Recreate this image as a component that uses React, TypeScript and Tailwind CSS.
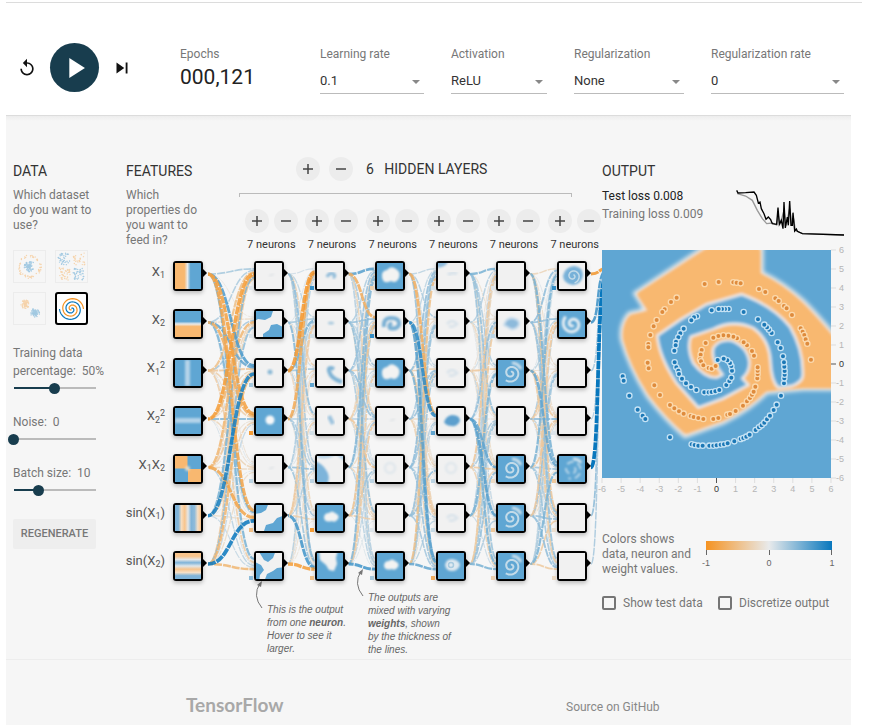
import React from "react";
import { MdPlayArrow, MdReplay, MdSkipNext } from "react-icons/md";

const ORANGE = "#f59322";
const BLUE = "#0877bd";
const PALE = "#e8eaeb";

const mix = (a: string, b: string, t: number) => {
  const ch = (s: string, i: number) => parseInt(s.slice(i, i + 2), 16);
  const out = [1, 3, 5].map((i) => Math.round(ch(a, i) + (ch(b, i) - ch(a, i)) * t));
  return `rgb(${out.join(",")})`;
};

/* Colour of a weight between -1 (orange) and 1 (blue). */
const weightColor = (w: number) => mix(PALE, w < 0 ? ORANGE : BLUE, Math.min(1, Math.abs(w)));

/* Small deterministic generator, so that the network looks the same each time. */
const seeded = (seed: number) => () => {
  seed = (seed * 1664525 + 1013904223) % 4294967296;
  return seed / 4294967296;
};

const spiral = (cx: number, cy: number, r0: number, r1: number, turns: number, phase: number) => {
  let d = "";
  const steps = 60;
  for (let i = 0; i <= steps; i++) {
    const t = i / steps;
    const r = r0 + (r1 - r0) * t;
    const a = phase + t * turns * 2 * Math.PI;
    d += `${i ? "L" : "M"}${(cx + r * Math.sin(a)).toFixed(1)} ${(cy - r * Math.cos(a)).toFixed(1)}`;
  }
  return d;
};

/* ---------- header ---------- */

function Picker({ id, label, value, size }: { id: string; label: string; value: string; size: string }) {
  return (
    <div className={`flex grow flex-col ${size}`}>
      <label htmlFor={id} className="text-[12px] leading-4 text-[#777]">
        {label}
      </label>
      <div className="relative mt-[6px]">
        <select
          id={id}
          defaultValue={value}
          className="h-[26px] w-full appearance-none border-b border-[#bbb] bg-transparent text-[13px] text-[#333] outline-none"
        >
          <option>{value}</option>
        </select>
        <span className="pointer-events-none absolute top-[12px] right-1 border-x-4 border-t-4 border-x-transparent border-t-[#888]" />
      </div>
    </div>
  );
}

function Header() {
  return (
    <header className="mr-[18px] ml-[6px] flex h-[113px] items-start border-b border-[#dcdcdc] pr-[7px] pt-[40px]">
      <div className="flex w-[174px] shrink-0 items-center">
        <button aria-label="Reset" className="ml-[11px] text-[#111]">
          <MdReplay size={20} />
        </button>
        <button
          aria-label="Run"
          className="ml-[13px] flex size-[49px] items-center justify-center rounded-full bg-[#183d4e] text-white"
        >
          <MdPlayArrow size={34} />
        </button>
        <button aria-label="Step" className="ml-[12px] text-[#111]">
          <MdSkipNext size={22} />
        </button>
      </div>
      <div className="w-[140px] shrink-0 pt-[3px]">
        <div className="text-[12px] leading-4 text-[#777]">Epochs</div>
        <div className="mt-px text-[21px] leading-7 text-[#222]">000,121</div>
      </div>
      <div className="flex grow gap-[27px] pt-[3px]">
        <Picker id="rate" label="Learning rate" value="0.1" size="basis-[104px]" />
        <Picker id="activation" label="Activation" value="ReLU" size="basis-[96px]" />
        <Picker id="reg" label="Regularization" value="None" size="basis-[110px]" />
        <Picker id="regrate" label="Regularization rate" value="0" size="basis-[133px]" />
      </div>
    </header>
  );
}

/* ---------- data column ---------- */

function DatasetThumb({ kind }: { kind: "circle" | "xor" | "gauss" | "spiral" }) {
  if (kind === "spiral") {
    return (
      <svg viewBox="0 0 29 29" className="size-full" fill="none" strokeWidth="1.2">
        <path d={spiral(14.5, 15, 0.5, 12, 1.75, 0)} stroke={BLUE} />
        <path d={spiral(14.5, 15, 0.5, 12, 1.75, Math.PI)} stroke={ORANGE} />
      </svg>
    );
  }
  const rnd = seeded(kind === "circle" ? 7 : kind === "xor" ? 21 : 45);
  const dots: [number, number, string][] = [];
  for (let i = 0; i < 150; i++) {
    const a = rnd() * Math.PI * 2;
    const r = rnd();
    const pick = rnd();
    if (kind === "circle") {
      const inner = pick < 0.5;
      const d = inner ? r * 5.5 : 9.5 + r * 2.5;
      dots.push([15.5 + d * Math.sin(a), 15.5 + d * Math.cos(a), inner ? BLUE : ORANGE]);
    } else if (kind === "xor") {
      const qx = pick < 0.5 ? 0 : 1;
      const qy = a < Math.PI ? 0 : 1;
      dots.push([2 + qx * 15 + r * 12, 2 + qy * 15 + rnd() * 12, qx === qy ? BLUE : ORANGE]);
    } else {
      const s = pick < 0.5;
      const d = r * 4.5;
      dots.push([(s ? 21 : 11) + d * Math.sin(a), (s ? 20 : 11) + d * Math.cos(a), s ? BLUE : ORANGE]);
    }
  }
  return (
    <svg viewBox="0 0 31 31" className="size-full opacity-35">
      {dots.map(([x, y, c], i) => (
        <circle key={i} cx={x} cy={y} r="0.7" fill={c} />
      ))}
    </svg>
  );
}

const RANGE =
  "-ml-[5px] mt-[2px] block h-[12px] w-[93px] appearance-none bg-[length:82px_2px] bg-center bg-no-repeat [&::-webkit-slider-thumb]:size-[11px] [&::-webkit-slider-thumb]:appearance-none [&::-webkit-slider-thumb]:rounded-full [&::-webkit-slider-thumb]:bg-[#183d4e]";

function DataColumn() {
  return (
    <section className="w-[113px] shrink-0 pt-1">
      <h2 className="text-[14px] leading-5 text-[#333]">DATA</h2>
      <p className="mt-[7px] w-[82px] text-[12px] leading-[15px] text-[#777]">Which dataset do you want to use?</p>
      <div className="mt-[17px] grid w-[75px] grid-cols-2 gap-[9px]">
        {(["circle", "xor", "gauss"] as const).map((k) => (
          <button key={k} aria-label={k} className="size-[33px] border border-[#ececec]">
            <DatasetThumb kind={k} />
          </button>
        ))}
        <button aria-label="spiral" className="size-[33px] rounded-[3px] border-2 border-black bg-white">
          <DatasetThumb kind="spiral" />
        </button>
      </div>
      <div className="mt-[19px] text-[12px] leading-[18px] text-[#777]">
        <label htmlFor="split" className="block whitespace-nowrap">
          Training data
          <br />
          percentage:&nbsp; 50%
        </label>
        <input id="split" type="range" min="10" max="90" defaultValue="50"
          className={`${RANGE} bg-[linear-gradient(to_right,#183d4e_50%,#bbb_50%)]`} />
        <label htmlFor="noise" className="mt-[19px] block">
          Noise:&nbsp; 0
        </label>
        <input id="noise" type="range" min="0" max="50" defaultValue="0"
          className={`${RANGE} bg-[linear-gradient(#bbb,#bbb)]`} />
        <label htmlFor="batch" className="mt-[19px] block">
          Batch size:&nbsp; 10
        </label>
        <input id="batch" type="range" min="1" max="30" defaultValue="10"
          className={`${RANGE} bg-[linear-gradient(to_right,#183d4e_31%,#bbb_31%)]`} />
      </div>
      <button className="mt-[23px] h-[30px] w-[83px] rounded-[2px] bg-[#eee] text-[11px] font-medium text-[#777]">
        REGENERATE
      </button>
    </section>
  );
}

/* ---------- network ---------- */

const LIGHT = "#f1f1f1";
const SKY = "#5fa6d3";
const PEACH = "#f8b870";

function NodePicture({ kind }: { kind: string }) {
  const soft = "url(#soft)";
  const sky = <rect width="26" height="26" fill={SKY} />;
  const blank = <rect width="26" height="26" fill={LIGHT} />;
  const body = (): React.ReactNode => {
    switch (kind) {
      case "x1":
        return <rect width="26" height="26" fill="url(#gx)" />;
      case "x2":
        return <rect width="26" height="26" fill="url(#gy)" />;
      case "x1sq":
        return <>{sky}<rect x="10" width="5" height="26" fill="#b4d3e9" filter={soft} /></>;
      case "x2sq":
        return <>{sky}<rect y="10" width="26" height="5" fill="#b4d3e9" filter={soft} /></>;
      case "x1x2":
        return (
          <>
            {sky}
            <path d="M0 0h12.500v12.500H0zM13 13h13v13H13z" fill={PEACH} />
            <circle cx="12.500" cy="12.500" r="2.500" fill="#e4d9c4" filter={soft} />
          </>
        );
      case "sin1":
        return <rect width="26" height="26" fill="url(#gs)" />;
      case "sin2":
        return <rect width="26" height="26" fill="url(#gt)" />;
      case "faint":
        return <>{blank}<path d="M13 13l5-2" stroke="#e2e5e7" strokeWidth="2" filter={soft} /></>;
      case "corners":
        return (
          <>
            {blank}
            <g fill={SKY} filter="url(#fine)">
              <path d="M-3-3H18L15 6L9 9L2 8L-3 11Z" />
              <path d="M29 17L21 13L15 14L13 19L7 23V29H29Z" />
            </g>
          </>
        );
      case "corners2":
        return (
          <>
            {blank}
            <g fill={SKY} filter="url(#fine)">
              <path d="M-3-3H13L10 5L5 8L-3 9Z" />
              <path d="M29 10L21 13L17 18L10 20L7 29H29Z" />
            </g>
          </>
        );
      case "cross":
        return (
          <>
            {blank}
            <g fill={SKY} filter="url(#fine)">
              <path d="M2-3H20L17 5L12 9L8 7Z" />
              <path d="M-3 8L5 12L8 17L4 22L3 29H-3Z" />
              <path d="M29 14L21 15L17 18L11 21L8 29H29Z" />
            </g>
          </>
        );
      case "dot":
        return <>{blank}<circle cx="14" cy="12" r="2.500" fill="#8bb9d6" filter={soft} /></>;
      case "smudge":
        return <>{blank}<ellipse cx="14" cy="12" rx="3" ry="1.500" fill="#a9c9de" filter={soft} /></>;
      case "tall":
        return <>{blank}<path d="M12 8l4 8" stroke="#9cc3de" strokeWidth="4" filter={soft} /></>;
      case "arc":
        return <>{blank}<path d="M10 14q2-5 7-3q2 2-1 4" fill="none" stroke="#8fbbd9" strokeWidth="3" filter={soft} /></>;
      case "swoosh":
        return (
          <>
            {blank}
            <path d="M17 9q-6-3-5 2q2 8 13 11" fill="none" stroke="#7fb3d5" strokeWidth="4" filter={soft} />
          </>
        );
      case "hole":
        return <>{sky}<circle cx="14" cy="12" r="4.500" fill="#f6f8f9" filter={soft} /></>;
      case "cloud":
        return (
          <>
            {sky}
            <path d="M7 13q0-5 5-5q3-3 6 0q5 2 3 6q-3 4-6 2q-7 2-8-3z" fill="#f3f3f2" filter={soft} />
          </>
        );
      case "bigcloud":
        return (
          <>
            {sky}
            <path d="M5 14q-1-6 5-7q4-5 9-1q5 3 3 9q-3 6-8 3q-8 4-9-4z" fill="#f3f3f2" filter={soft} />
          </>
        );
      case "bay":
        return (
          <>
            {sky}
            <path d="M2-3L3 7L9 12L12 17L17 18L20 11L19 5L21-3Z" fill={LIGHT} filter={soft} />
          </>
        );
      case "side":
        return (
          <>
            {blank}
            <path d="M-3 5Q5 7 9 14Q14 20 10 29H-3Z" fill="#7db4da" filter={soft} />
            <path d="M0 1Q8 5 19-1L29 6V-3H0Z" fill="#b7d4e8" filter={soft} />
          </>
        );
      case "curl":
        return (
          <>
            {blank}
            <path d="M7 16q-1-9 7-9q9 0 8 7q-3 5-9 3q-2-3 2-5" fill="none" stroke="#7ab0d4" strokeWidth="4" filter={soft} />
          </>
        );
      case "blob":
        return <>{blank}<path d="M6 14q2-6 8-7q8 0 8 6q-3 6-8 5q-6 0-8-4z" fill="#5c9fcd" filter={soft} /></>;
      case "paleblob":
        return <>{blank}<path d="M6 14q2-7 8-7q8 1 7 7q-3 5-8 4z" fill="#8dbadb" stroke="#c9ddec" strokeWidth="2" filter={soft} /></>;
      case "mist":
        return <>{blank}<path d="M9 13q5-6 10 0q-4 4-8 2" fill="none" stroke="#dbe4eb" strokeWidth="3" filter={soft} /></>;
      case "mistring":
        return <>{blank}<circle cx="13" cy="12" r="5" fill="none" stroke="#e0e7ec" strokeWidth="2.500" filter={soft} /></>;
      case "cornermist":
        return (
          <>
            {blank}
            <path d="M-2-2h12q-1 6-12 7z" fill="#8dbadb" filter={soft} />
            <path d="M10 12q5-4 9-1" stroke="#dbe4eb" strokeWidth="4" fill="none" filter={soft} />
          </>
        );
      case "swirl":
        return (
          <>
            {blank}
            <path d="M4 13q2-9 11-10q9 1 9 9q-1 9-10 10q-9-1-10-9z" fill="#78b1d8" filter={soft} />
            <path d={spiral(14, 13, 1, 7, 1.4, 0.4)} fill="none" stroke="#c3dbe9" strokeWidth="1.500" filter="url(#fine)" />
          </>
        );
      case "spiralbold":
        return (
          <>
            {sky}
            <path d={spiral(13.5, 13, 1, 10, 1.5, 2.4)} fill="none" stroke="#e6eef3" strokeWidth="3" filter={soft} />
          </>
        );
      case "spiral":
        return (
          <>
            {sky}
            <path d={spiral(13, 13, 1, 9, 1.6, 0)} fill="none" stroke="#c3dbe9" strokeWidth="2" filter="url(#fine)" />
            <path d="M14 3q6 0 9 6" fill="none" stroke="#cfe1ec" strokeWidth="3" filter={soft} />
          </>
        );
      case "broken":
        return (
          <>
            {sky}
            <path d={spiral(13, 13, 3, 10, 1.4, 1)} fill="none" stroke="#b9d6e8" strokeWidth="2" strokeDasharray="7 4" filter={soft} />
            <path d="M14 3q6 0 8 4" fill="none" stroke="#cfe1ec" strokeWidth="3" filter={soft} />
          </>
        );
      case "eye":
        return (
          <>
            {sky}
            <path d="M7 12q1-6 7-6q7 1 8 6q-2 6-8 6q-6 0-7-6z" fill="#dfe9f0" filter={soft} />
            <circle cx="13" cy="12" r="2.500" fill="none" stroke="#a9cbe0" strokeWidth="1.500" filter="url(#fine)" />
          </>
        );
      default:
        return blank;
    }
  };
  return (
    <svg viewBox="0 0 26 26" className="size-full">
      {body()}
    </svg>
  );
}

function Node({ kind, bias }: { kind: string; bias?: number }) {
  return (
    <div className="relative size-[30px] rounded-[3px] border-2 border-black shadow-[0_2px_4px_rgba(0,0,0,0.25)]">
      <NodePicture kind={kind} />
      <span className="absolute top-[6px] left-[28px] border-y-4 border-l-4 border-y-transparent border-l-black" />
      {bias !== undefined && (
        <span className="absolute top-[23px] -left-[7px] size-1" style={{ backgroundColor: weightColor(bias) }} />
      )}
    </div>
  );
}

const FEATURES: { kind: string; label: React.ReactNode }[] = [
  { kind: "x1", label: <>X<Sub>1</Sub></> },
  { kind: "x2", label: <>X<Sub>2</Sub></> },
  { kind: "x1sq", label: <>X<Sub>1</Sub><Sup>2</Sup></> },
  { kind: "x2sq", label: <>X<Sub>2</Sub><Sup>2</Sup></> },
  { kind: "x1x2", label: <>X<Sub>1</Sub>X<Sub>2</Sub></> },
  { kind: "sin1", label: <>sin(X<Sub>1</Sub>)</> },
  { kind: "sin2", label: <>sin(X<Sub>2</Sub>)</> },
];

function Sub({ children }: { children: React.ReactNode }) {
  return <sub className="text-[9px]">{children}</sub>;
}
function Sup({ children }: { children: React.ReactNode }) {
  return <sup className="text-[9px]">{children}</sup>;
}

const LAYERS: [string, number][][] = [
  [["faint", 0.05], ["corners", 0.05], ["dot", 0.3], ["hole", -0.9], ["faint", 0.2], ["corners2", -0.5], ["cross", 0.4]],
  [["arc", 0.8], ["smudge", 0.1], ["swoosh", 0.6], ["tall", 0.1], ["side", 0.2], ["cloud", -0.9], ["bay", -0.5]],
  [["bigcloud", -0.3], ["curl", 0.8], ["bigcloud", 0.1], ["faint", 0.05], ["mistring", 0.2], ["blank", 0.05], ["cloud", 0.3]],
  [["cornermist", 0.1], ["mist", 0.1], ["mist", 0.1], ["blob", 0.6], ["mistring", 0.2], ["mist", 0.15], ["eye", -0.7]],
  [["blank", 0.05], ["paleblob", 0.2], ["spiral", -0.1], ["blank", 0.05], ["spiral", -0.2], ["spiral", -0.4], ["spiral", -0.3]],
  [["swirl", 0.8], ["spiralbold", 0.05], ["blank", 0.05], ["blank", 0.05], ["broken", -0.4], ["blank", -0.15], ["blank", -0.2]],
];

/* Strong connections: gap index, source row, target row, weight. */
const STRONG: [number, number, number, number][] = [
  [0, 6, 5, 1], [0, 6, 6, -0.6], [0, 5, 2, 0.95], [0, 3, 0, -0.9], [0, 3, 1, -0.6], [0, 0, 3, -0.85],
  [0, 0, 2, 0.7], [0, 0, 5, -0.8], [0, 4, 0, -0.6], [0, 4, 5, -0.8], [0, 1, 3, -0.7], [0, 1, 2, 0.6],
  [0, 1, 5, 0.5], [0, 5, 0, 0.5], [0, 6, 2, -0.6], [0, 2, 0, -0.5], [0, 0, 0, 0.3], [0, 3, 3, 0.45],
  [0, 2, 2, -0.4], [0, 0, 6, 0.5], [0, 6, 1, 0.4],
  [1, 2, 0, -0.95], [1, 3, 0, -0.75], [1, 5, 6, 0.75], [1, 6, 6, -0.9], [1, 2, 1, 0.5], [1, 1, 6, 0.45], [1, 0, 3, 0.4],
  [2, 0, 0, 0.65], [2, 0, 1, -0.7], [2, 6, 6, 0.75], [2, 4, 0, 0.45], [2, 6, 0, 0.45], [2, 5, 1, -0.45],
  [3, 1, 3, 0.85], [3, 0, 3, -0.7], [3, 1, 6, 0.65], [3, 2, 6, 0.5], [3, 6, 6, 0.6], [3, 6, 0, -0.5], [3, 4, 0, 0.4],
  [4, 0, 0, 0.5], [4, 3, 4, 0.6], [4, 3, 5, 0.65], [4, 3, 6, 0.5], [4, 6, 6, 0.5], [4, 5, 2, 0.5], [4, 4, 0, -0.4], [4, 3, 1, 0.4],
  [5, 0, 4, 0.5], [5, 2, 4, 0.6], [5, 4, 0, 0.5], [5, 6, 4, 0.5], [5, 1, 0, 0.4], [5, 5, 1, -0.4],
];

const rowY = (i: number) => 13 + i * (290 / 6);
const startX = (g: number) => (g === 0 ? 82 : 128 + (g - 1) * 60.6 + 34);
const endX = (g: number) => 128 + g * 60.6;

function Links() {
  const rnd = seeded(11);
  const links: { g: number; s: number; t: number; w: number }[] = [];
  for (let g = 0; g < 6; g++)
    for (let s = 0; s < 7; s++)
      for (let t = 0; t < 7; t++) {
        const strong = STRONG.find((k) => k[0] === g && k[1] === s && k[2] === t);
        const a = rnd();
        const b = rnd();
        links.push({ g, s, t, w: strong ? strong[3] : (a < 0.48 ? -1 : 1) * (0.05 + b * 0.35) });
      }
  links.sort((a, b) => Math.abs(a.w) - Math.abs(b.w));
  const out: [number, number][] = [[0, -0.8], [1, 0.65], [2, 0.25], [3, 0.2], [5, 0.35], [6, 0.25], [4, 1]];
  return (
    <svg className="pointer-events-none absolute inset-0 h-[320px] w-[476px]" viewBox="0 0 476 320" fill="none">
      <defs>
        <filter id="soft" x="-30%" y="-30%" width="160%" height="160%"><feGaussianBlur stdDeviation="1" /></filter>
        <filter id="fine" x="-30%" y="-30%" width="160%" height="160%"><feGaussianBlur stdDeviation="0.6" /></filter>
        <linearGradient id="gx">
          <stop offset="0.36" stopColor={PEACH} /><stop offset="0.48" stopColor={PALE} /><stop offset="0.6" stopColor={SKY} />
        </linearGradient>
        <linearGradient id="gy" x2="0" y2="1">
          <stop offset="0.4" stopColor={SKY} /><stop offset="0.5" stopColor={PALE} /><stop offset="0.6" stopColor={PEACH} />
        </linearGradient>
        {["gs", "gt"].map((id) => (
          <linearGradient key={id} id={id} x2={id === "gs" ? 1 : 0} y2={id === "gs" ? 0 : 1}>
            {(id === "gs"
              ? ["#7fb3d8", "#7fb3d8", "#f7dcbd", "#f8c48c", "#e4e6e7", "#7fb3d8", "#8fbbda", "#f5dfc6", "#f8c48c"]
              : ["#f8c48c", "#f8c48c", "#e4e6e7", "#7fb3d8", "#dfe6ea", "#f8c48c", "#f5dfc6", "#7fb3d8", "#7fb3d8"]
            ).map((c, i) => (
              <stop key={i} offset={i / 8} stopColor={c} />
            ))}
          </linearGradient>
        ))}
      </defs>
      {links.map(({ g, s, t, w }) => {
        const x0 = startX(g);
        const x1 = endX(g);
        const y0 = rowY(s);
        const y1 = rowY(t) + ((s - 3) / 7) * 12;
        const m = (x0 + x1) / 2;
        return (
          <path
            key={`${g}-${s}-${t}`}
            d={`M${x0} ${y0}C${m} ${y0} ${m} ${y1} ${x1} ${y1}`}
            stroke={weightColor(w)}
            strokeWidth={0.7 + Math.abs(w) * 3}
            strokeOpacity={0.85}
            strokeDasharray="8 1"
            strokeDashoffset={(s * 5 + t * 3) % 9}
          />
        );
      })}
      {out.map(([s, w]) => (
        <path
          key={s}
          d={`M465 ${rowY(s)}C474 ${rowY(s)} 470 ${10 + s * 2} 480 ${7 + s * 2}`}
          stroke={weightColor(w)}
          strokeWidth={0.7 + Math.abs(w) * 3}
          strokeDasharray="8 1"
        />
      ))}
    </svg>
  );
}

function RoundButton({ sign, label }: { sign: "+" | "-"; label: string }) {
  return (
    <button aria-label={label} className="flex size-6 items-center justify-center rounded-full bg-[#ececec]">
      <svg viewBox="0 0 12 12" className="size-3" stroke="#444" strokeWidth="1.5">
        <path d={sign === "+" ? "M1 6h10M6 1v10" : "M1 6h10"} />
      </svg>
    </button>
  );
}

function Network() {
  return (
    <section className="w-[476px] shrink-0">
      <div className="flex">
        <div className="w-[113px] shrink-0 pt-1">
          <h2 className="text-[14px] leading-5 text-[#333]">FEATURES</h2>
          <p className="mt-[7px] w-[72px] text-[12px] leading-[15px] text-[#777]">
            Which properties do you want to feed in?
          </p>
        </div>
        <div className="w-[363px] pb-2">
          <div className="flex items-center gap-[9px] pl-[57px]">
            <RoundButton sign="+" label="Add layer" />
            <RoundButton sign="-" label="Remove layer" />
            <h2 className="ml-1 text-[14px] leading-5 whitespace-pre text-[#333]">6{"   "}HIDDEN LAYERS</h2>
          </div>
          <div className="mt-3 h-1 w-[333px] border-x border-t border-[#bbb]" />
          <div className="ml-[2px] mt-3 grid w-[364px] grid-cols-6">
            {LAYERS.map((_, i) => (
              <div key={i} className="flex flex-col items-center gap-1">
                <div className="flex gap-[5px]">
                  <RoundButton sign="+" label="Add neuron" />
                  <RoundButton sign="-" label="Remove neuron" />
                </div>
                <div className="text-[11px] leading-4 text-[#333]">7 neurons</div>
              </div>
            ))}
          </div>
        </div>
      </div>

      <div className="relative flex h-[320px]">
        <Links />
        <div className="flex w-[39px] flex-col justify-between pt-px text-right text-[13px] leading-5 whitespace-nowrap text-[#555]">
          {FEATURES.map((f) => (
            <div key={f.kind} className="flex h-[30px] items-start justify-end">
              <span>{f.label}</span>
            </div>
          ))}
        </div>
        <div className="ml-2 flex flex-col justify-between">
          {FEATURES.map((f) => (
            <Node key={f.kind} kind={f.kind} />
          ))}
        </div>
        <div className="ml-[51px] flex w-[333px] justify-between">
          {LAYERS.map((layer, i) => (
            <div key={i} className="flex flex-col justify-between">
              {layer.map(([kind, bias], j) => (
                <Node key={j} kind={kind} bias={bias} />
              ))}
            </div>
          ))}
        </div>
      </div>

      <div className="flex items-start pl-[128px] font-['Liberation_Sans',sans-serif] text-[10px] leading-[13px] whitespace-nowrap text-[#666] italic">
        <Arrow />
        <p className="mt-[22px] w-[82px]">
          This is the output
          <br />
          from one <b>neuron</b>.
          <br />
          Hover to see it
          <br />
          larger.
        </p>
        <div className="-mt-3 ml-[6px]">
          <Arrow />
        </div>
        <p className="mt-[10px] w-[86px]">
          The outputs are
          <br />
          mixed with varying
          <br />
          <b>weights</b>, shown
          <br />
          by the thickness of
          <br />
          the lines.
        </p>
      </div>
    </section>
  );
}

function Arrow() {
  return (
    <svg viewBox="0 0 13 30" className="h-[30px] w-[13px] shrink-0" fill="none" stroke="#777">
      <path d="M8 27Q-2 15 6 2" />
      <path d="M8 0l-5 4 4 2z" fill="#777" stroke="none" />
    </svg>
  );
}

/* ---------- output ---------- */

const ORANGE_DOTS =
  "344,132 386,126 430,127 440,128 452,130 507,147 526,156 556,175 566,183 582,198 590,205 606,225 632,265 638,275 643,285 647,298 652,311 663,359 260,173 243,186 224,208 217,216 200,240 191,259 181,285 175,312 175,322 173,368 176,385 193,436 210,465 240,495 253,505 267,514 281,521 302,528 311,531 325,534 340,537 370,537 385,534 412,524 420,522 437,513 459,497 471,484 480,474 486,464 491,455 496,440 502,415 503,402 503,392 503,382 492,347 486,333 471,316 461,307 441,295 430,290 415,287 400,286 385,288 370,293 347,309 335,330 332,344 330,358 333,364 340,376 356,384 365,386 377,378";
const BLUE_DOTS =
  "98,409 101,422 118,467 143,509 158,527 166,537 240,592 305,613 314,615 325,617 338,617 358,617 370,617 380,616 392,614 402,613 413,610 433,604 452,597 460,594 469,590 479,584 497,570 507,562 515,556 523,548 531,538 540,527 551,510 560,494 573,467 582,430 583,415 584,404 584,393 583,380 582,367 579,349 572,324 563,307 545,279 537,269 531,262 523,254 504,238 461,216 416,207 405,207 396,207 386,207 365,211 321,229 312,232 304,241 281,266 271,280 265,292 258,305 257,316 253,332 254,367 259,382 265,392 267,402 276,416 288,430 303,441 319,450 343,457 356,457 365,456 376,454 388,450 409,435 418,423 424,413 426,392 424,378 420,369 412,361 401,356 383,360";

const toPoints = (s: string) => s.split(" ").map((p) => p.split(",").map(Number));

function Heatmap() {
  const ticks = Array.from({ length: 13 }, (_, i) => i - 6);
  return (
    <svg viewBox="-1 -8 250 254" className="-mt-2 -ml-px block h-[254px] w-[250px] overflow-visible">
      <defs>
        <clipPath id="map"><rect width="229" height="228" /></clipPath>
        <filter id="edge" filterUnits="userSpaceOnUse" x="-20" y="-20" width="800" height="800">
          <feGaussianBlur stdDeviation="7" />
        </filter>
        <filter id="edge2" filterUnits="userSpaceOnUse" x="-20" y="-20" width="800" height="800">
          <feGaussianBlur stdDeviation="4" />
        </filter>
      </defs>
      <g clipPath="url(#map)">
        <rect width="229" height="228" fill={SKY} />
        <g transform="translate(-12 -10) scale(0.3333)">
          <g filter="url(#edge)">
            <path
              d="M345 20H516V98Q580 128 640 182Q690 232 750 305V447H640L530 458Q480 510 400 548L285 590Q225 538 172 468Q118 380 95 300Q88 252 117 220L165 210L134 160Z"
              fill={PEACH}
              stroke="#edf0f1"
              strokeWidth="10"
            />
          </g>
          <g filter="url(#edge2)">
            <path
              d="M355 26H509V101Q580 135 635 190Q680 235 740 308V443H640L528 452Q475 500 398 540L288 579Q230 532 177 462Q123 380 102 300Q96 255 122 227L178 213L142 161Z"
              fill={PEACH}
            />
            <path
              d="M565 443L605 438Q642 425 638 400Q640 330 600 260Q550 198 455 163L350 193L270 240L202 287Q207 350 260 430L325 503L400 475L475 435L457 415Q480 395 478 365Q472 320 425 302Q385 297 370 325Q362 360 398 404L380 413Q345 415 310 370Q290 325 302 290L370 267Q430 237 490 264Q540 300 542 370Q545 425 565 443Z"
              fill={SKY}
              stroke="#edf0f1"
              strokeWidth="7"
            />
          </g>
          <g strokeWidth="4">
            {toPoints(ORANGE_DOTS).map(([x, y], i) => (
              <circle key={i} cx={x} cy={y} r="8" fill="#df8b3c" stroke="#fbd9ad" />
            ))}
            {toPoints(BLUE_DOTS).map(([x, y], i) => (
              <circle key={i} cx={x} cy={y} r="8" fill="#1c78b6" stroke="#c5e2f4" />
            ))}
          </g>
        </g>
      </g>
      <g fontSize="9" className="font-['Liberation_Sans',sans-serif]">
        {ticks.map((v) => {
          const x = ((v + 6) / 12) * 229;
          const y = 228 - ((v + 6) / 12) * 228;
          const c = v === 0 ? "#333" : "#b5b5b5";
          return (
            <g key={v} fill={c}>
              <path d={`M${x} 228v5M229 ${y}h5`} stroke={v === 0 ? "#555" : "#ddd"} />
              <text x={x} y="242" textAnchor="middle">{v}</text>
              <text x="242" y={y + 3} textAnchor="end">{v}</text>
            </g>
          );
        })}
      </g>
    </svg>
  );
}

function Output() {
  return (
    <section className="w-[249px] shrink-0 pt-1">
      <h2 className="text-[14px] leading-5 text-[#333]">OUTPUT</h2>
      <div className="mt-[6px] flex h-[63px] justify-between pr-[6px] text-[12px] leading-[18px]">
        <div className="whitespace-nowrap">
          <div className="text-[#222]">Test loss 0.008</div>
          <div className="text-[#777]">Training loss 0.009</div>
        </div>
        <svg viewBox="436 110 327 156" className="h-[52px] w-[109px] shrink-0" fill="none" strokeWidth="4">
          <path
            d="M440 130L465 137L485 150L500 180L515 205L528 220L545 218L558 224L562 190L568 222L580 180L586 226L597 175L603 225L609 205L614 240L635 250L760 254"
            stroke="#999"
          />
          <path
            d="M438 120L442 128L465 127L490 125L497 135L503 158L508 155L512 175L520 190L526 207L533 200L540 208L545 220L558 222L562 172L566 222L572 210L577 235L580 155L584 233L590 200L593 225L597 152L601 225L605 225L607 187L612 242L617 236L620 243L635 250L760 254"
            stroke="#000"
          />
        </svg>
      </div>
      <div className="flow-root">
        <Heatmap />
      </div>
      <div className="mt-[36px] flex">
        <p className="w-[104px] text-[12px] leading-[15px] whitespace-nowrap text-[#777]">
          Colors shows
          <br />
          data, neuron and
          <br />
          weight values.
        </p>
        <svg viewBox="0 0 136 32" className="-ml-1 mt-[9px] h-[32px] w-[136px]">
          <defs>
            <linearGradient id="scale">
              <stop stopColor={ORANGE} /><stop offset="0.5" stopColor={PALE} /><stop offset="1" stopColor={BLUE} />
            </linearGradient>
          </defs>
          <rect x="4" width="126" height="9" fill="url(#scale)" />
          <path d="M4.500 9v5M67.500 9v5M129.500 9v5" stroke="#666" />
          <g fontSize="9" fill="#666" textAnchor="middle" className="font-['Liberation_Sans',sans-serif]">
            <text x="4" y="25">-1</text>
            <text x="67" y="25">0</text>
            <text x="130" y="25">1</text>
          </g>
        </svg>
      </div>
      <div className="mt-[17px] flex text-[12px] leading-[18px] text-[#777]">
        <label className="flex w-[116px] items-center gap-[7px] whitespace-nowrap">
          <input type="checkbox" className="size-[14px] appearance-none rounded-[2px] border-2 border-[#757575]" />
          Show test data
        </label>
        <label className="flex items-center gap-[7px] whitespace-nowrap">
          <input type="checkbox" className="size-[14px] appearance-none rounded-[2px] border-2 border-[#757575]" />
          Discretize output
        </label>
      </div>
    </section>
  );
}

export default function App() {
  return (
    <div className="min-h-screen bg-white pt-[2px] font-[Roboto,sans-serif]">
      <div className="mr-[7px] ml-[6px] border-t border-[#dcdcdc]" />
      <Header />
      <div className="mr-[18px] ml-[6px] bg-[#f6f6f6] bg-[linear-gradient(#ededed,#f6f6f6_5px)]">
        <main className="flex min-h-[543px] justify-between pt-[41px] pl-[7px]">
          <DataColumn />
          <Network />
          <Output />
        </main>
        <footer className="flex h-[66px] items-start border-t border-[#ededed] pt-[33px] pl-[180px]">
          <span className="w-[380px] font-[Lato,sans-serif] text-[19px] leading-6 font-bold text-[#a8a8a8]">TensorFlow</span>
          <a href="#source" className="mt-[6px] text-[12px] leading-4 text-[#888]">
            Source on GitHub
          </a>
        </footer>
      </div>
    </div>
  );
}
